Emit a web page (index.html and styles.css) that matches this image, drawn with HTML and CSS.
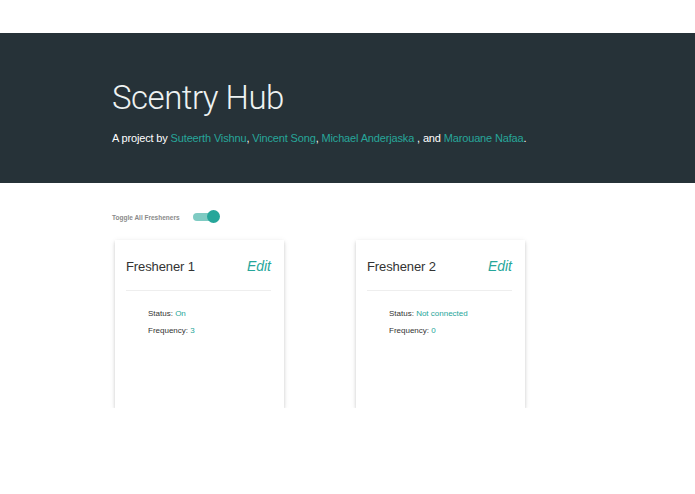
FILE: index.html
```html
<!DOCTYPE html>
<html>
<head>
<meta charset="utf-8">
<link rel="stylesheet" href="styles.css">
</head>
<body>
<div class="topgap"></div>
<header class="hero">
  <h1 class="title">Scentry Hub</h1>
  <p class="byline">A project by <a>Suteerth Vishnu</a>, <a>Vincent Song</a>, <a>Michael Anderjaska</a> , and <a>Marouane Nafaa</a>.</p>
</header>
<main class="content">
  <div class="toggle-row">
    <span class="toggle-label">Toggle All Fresheners</span>
    <span class="switch"><span class="track"></span><span class="knob"></span></span>
  </div>
  <div class="cards">
    <div class="card">
      <div class="card-head">
        <span class="card-title">Freshener 1</span>
        <a class="edit">Edit</a>
      </div>
      <div class="card-body">
        <p class="row">Status: <span class="val">On</span></p>
        <p class="row">Frequency: <span class="val">3</span></p>
      </div>
    </div>
    <div class="card">
      <div class="card-head">
        <span class="card-title">Freshener 2</span>
        <a class="edit">Edit</a>
      </div>
      <div class="card-body">
        <p class="row">Status: <span class="val">Not connected</span></p>
        <p class="row">Frequency: <span class="val">0</span></p>
      </div>
    </div>
  </div>
</main>
</body>
</html>
```
FILE: styles.css
```css
html, body {
  margin: 0;
  padding: 0;
  background: #ffffff;
  font-family: "Liberation Sans", Arial, sans-serif;
}
.topgap {
  height: 33px;
}
.hero {
  background: #263238;
  height: 150px;
  box-sizing: border-box;
  padding: 46px 0 0 112px;
}
.title {
  margin: 0;
  font-family: Roboto, sans-serif;
  font-weight: 300;
  font-size: 33px;
  line-height: 38px;
  color: #eef2f2;
  letter-spacing: -0.5px;
}
.byline {
  margin: 14px 0 0 0;
  font-size: 11px;
  line-height: 14px;
  color: #ffffff;
  letter-spacing: -0.15px;
}
.byline a {
  color: #26a69a;
}
.content {
  padding: 28px 0 0 112px;
}
.toggle-row {
  display: flex;
  align-items: center;
  height: 12px;
}
.toggle-label {
  font-size: 6.5px;
  font-weight: bold;
  color: #8a8a8a;
  width: 81px;
}
.switch {
  position: relative;
  display: inline-block;
  width: 27px;
  height: 12px;
}
.track {
  position: absolute;
  left: 0;
  top: 2px;
  width: 24px;
  height: 8px;
  border-radius: 4px;
  background: #7fcbc3;
}
.knob {
  position: absolute;
  left: 14px;
  top: -1px;
  width: 13px;
  height: 13px;
  border-radius: 50%;
  background: #26a69a;
}
.cards {
  display: flex;
  gap: 72px;
  margin: 17px 0 0 3px;
}
.card {
  width: 169px;
  height: 168px;
  background: #fff;
  box-shadow: 0 2px 3px rgba(0,0,0,0.16), 0 1px 6px rgba(0,0,0,0.08);
  box-sizing: border-box;
  padding: 0 13px 0 11px;
}
.card-head {
  display: flex;
  justify-content: space-between;
  align-items: center;
  height: 50px;
  border-bottom: 1px solid #eeeeee;
}
.card-title {
  font-size: 13px;
  color: #333;
  padding-top: 2px;
  letter-spacing: -0.1px;
}
.edit {
  font-size: 14px;
  font-style: italic;
  color: #26a69a;
  padding-top: 2px;
}
.card-body {
  padding: 18px 0 0 22px;
}
.row {
  margin: 0 0 8px 0;
  font-size: 8px;
  line-height: 9px;
  color: #333;
}
.val {
  color: #26a69a;
}
```
